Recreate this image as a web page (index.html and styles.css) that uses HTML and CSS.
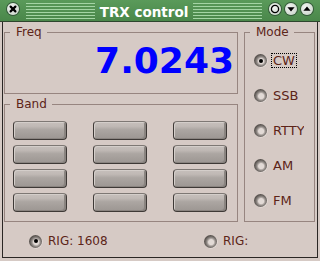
FILE: index.html
```html
<!DOCTYPE html>
<html lang="en">
<head>
	<meta charset="UTF-8">
	<title>TRX control</title>
	<link rel="stylesheet" href="styles.css">
</head>
<body>
	<div class="titlebar">
		<span class="tbtn close">
			<svg width="12" height="12" viewBox="0 0 12 12"><path d="M3.6 3.6 L8.4 8.4 M8.4 3.6 L3.6 8.4" stroke="#000" stroke-width="2.2" stroke-linecap="round"/></svg>
		</span>
		<span class="grip"></span>
		<span class="title">TRX control</span>
		<span class="grip"></span>
		<div class="tbtns">
			<span class="tbtn"><svg width="12" height="12" viewBox="0 0 12 12"><circle cx="6" cy="6" r="3.6" fill="none" stroke="#000" stroke-width="1.3"/></svg></span>
			<span class="tbtn"><svg width="12" height="12" viewBox="0 0 12 12"><path d="M2.4 4.2 H9.6 L6 8.6 Z" fill="#000"/></svg></span>
			<span class="tbtn"><svg width="12" height="12" viewBox="0 0 12 12"><path d="M2.4 7.8 H9.6 L6 3.4 Z" fill="#000"/></svg></span>
		</div>
	</div>

	<div class="frame">
		<div class="panes">
			<div class="leftcol">
				<fieldset class="group freq">
					<legend>Freq</legend>
					<div class="freq-value">7.0243</div>
				</fieldset>
				<fieldset class="group band">
					<legend>Band</legend>
					<div class="band-grid">
						<span class="bbtn"></span><span class="bbtn"></span><span class="bbtn"></span>
						<span class="bbtn"></span><span class="bbtn"></span><span class="bbtn"></span>
						<span class="bbtn"></span><span class="bbtn"></span><span class="bbtn"></span>
						<span class="bbtn"></span><span class="bbtn"></span><span class="bbtn"></span>
					</div>
				</fieldset>
			</div>
			<fieldset class="group mode">
				<legend>Mode</legend>
				<div class="mode-list">
					<div class="mode-item"><span class="radio on"></span><span class="mlabel focus">CW</span></div>
					<div class="mode-item"><span class="radio"></span><span class="mlabel">SSB</span></div>
					<div class="mode-item"><span class="radio"></span><span class="mlabel">RTTY</span></div>
					<div class="mode-item"><span class="radio"></span><span class="mlabel">AM</span></div>
					<div class="mode-item"><span class="radio"></span><span class="mlabel">FM</span></div>
				</div>
			</fieldset>
		</div>
		<div class="rigs">
			<div class="rig"><span class="radio on"></span><span>RIG: 1608</span></div>
			<div class="rig"><span class="radio"></span><span>RIG:</span></div>
		</div>
	</div>
</body>
</html>
```

FILE: styles.css
```css
*{
	padding: 0;
	margin: 0;
	box-sizing: border-box;
}
body {
	width: 320px;
	height: 261px;
	overflow: hidden;
	background: #d6cac5;
	font-family: "DejaVu Sans", sans-serif;
	color: #5c2418;
}
/* title bar */
.titlebar {
	height: 22px;
	display: flex;
	align-items: flex-start;
	padding: 0 7px;
	background: linear-gradient(#5a9a5a, #4a874a);
	border-bottom: 1px solid #2e452e;
}
.tbtn {
	width: 12px;
	height: 12px;
	margin-top: 3px;
	border-radius: 50%;
	display: flex;
	background: radial-gradient(circle at 40% 35%, #f2f5f2, #c4cec4);
	box-shadow: 0 0 0 1px #35583a;
}
.grip {
	flex: 1;
	height: 17px;
	margin-top: 3px;
	background: repeating-linear-gradient(to bottom, #a4d4a4 0 1px, transparent 1px 3px);
}
.close {
	margin-right: 7px;
}
.title {
	margin: 4px 5px 0;
	line-height: 16px;
	font-size: 13.5px;
	font-weight: bold;
	color: #fff;
}
.tbtns {
	display: flex;
	gap: 4px;
	margin-left: 7px;
}
/* window body */
.frame {
	height: 236px;
	margin: 0 2px;
	border: 1px solid #2a2624;
	border-top: none;
}
.panes {
	display: grid;
	grid-template-columns: 234px 71px;
	column-gap: 6px;
	padding: 3px 0 0 1px;
}
.group {
	border: 1px solid #978580;
	min-width: 0;
}
.group legend {
	margin-left: 5px;
	padding: 0 5px 0 6px;
	font-size: 12px;
	line-height: 14px;
}
.freq-value {
	padding: 4px 3px 14px 0;
	text-align: right;
	font-size: 36px;
	line-height: 36px;
	font-weight: bold;
	color: #0000ff;
}
.band {
	margin-top: 3px;
}
.band-grid {
	display: grid;
	grid-template-columns: repeat(3, 54px);
	grid-auto-rows: 19px;
	column-gap: 26px;
	row-gap: 5px;
	padding: 10px 0 9px 8px;
}
.bbtn {
	border-radius: 4px;
	border: 1px solid #3e3936;
	border-top-color: #7e7874;
	background: linear-gradient(#c6bfbb 0, #c0b9b5 25%, #aca6a2 45%, #9c9692 100%);
	box-shadow: inset 1px 1px 0 #d4ceca, inset -2px -1px 0 #8a8480;
}
.mode-list {
	padding: 4px 10px 3px 9px;
}
.mode-item {
	height: 35px;
	display: flex;
	align-items: center;
	gap: 4px;
	overflow: hidden;
	font-size: 13px;
}
.mlabel {
	line-height: 13px;
	padding: 0 1px;
	border: 1px dotted transparent;
	white-space: nowrap;
}
.mlabel.focus {
	border-color: #000;
}
/* radio buttons */
.radio {
	flex: none;
	width: 13px;
	height: 13px;
	border-radius: 50%;
	position: relative;
	background: radial-gradient(circle at 55% 55%, #e2dad6 0 2.6px, #b8b0ac 3.4px, #8a8480 4.6px, #5a5450 6.5px);
	box-shadow: 0.5px 0.5px 0 #efe9e6;
}
.radio.on::after {
	content: "";
	position: absolute;
	left: 4.5px;
	top: 4.5px;
	width: 4px;
	height: 4px;
	border-radius: 50%;
	background: #000;
}
.rigs {
	display: grid;
	grid-template-columns: 175px auto;
	margin-top: 12px;
	padding-left: 26px;
	font-size: 12px;
}
.rig {
	display: flex;
	align-items: center;
	gap: 6px;
	line-height: 14px;
}
```
